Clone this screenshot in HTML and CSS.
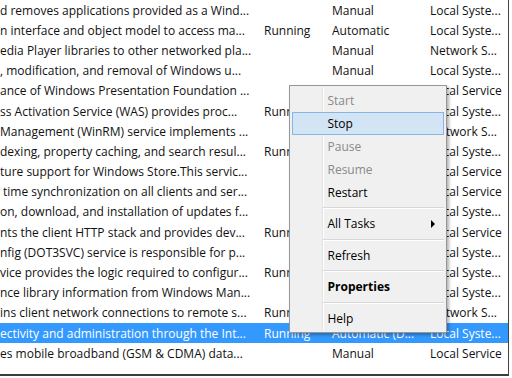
FILE: index.html
```html
<!DOCTYPE html>
<html>
<head>
<meta charset="utf-8">
<link rel="stylesheet" href="styles.css">
</head>
<body>
<div class="window">
  <div class="list">
    <div class="row"><span class="c desc">d removes applications provided as a Wind...</span><span class="c status"></span><span class="c type">Manual</span><span class="c logon">Local Syste...</span></div>
    <div class="row"><span class="c desc">n interface and object model to access ma...</span><span class="c status">Running</span><span class="c type">Automatic</span><span class="c logon">Local Syste...</span></div>
    <div class="row"><span class="c desc">edia Player libraries to other networked pla...</span><span class="c status"></span><span class="c type">Manual</span><span class="c logon">Network S...</span></div>
    <div class="row"><span class="c desc">, modification, and removal of Windows u...</span><span class="c status"></span><span class="c type">Manual</span><span class="c logon">Local Syste...</span></div>
    <div class="row"><span class="c desc">ance of Windows Presentation Foundation ...</span><span class="c status"></span><span class="c type"></span><span class="c logon">Local Service</span></div>
    <div class="row"><span class="c desc">ss Activation Service (WAS) provides proc...</span><span class="c status">Running</span><span class="c type"></span><span class="c logon">Local Syste...</span></div>
    <div class="row"><span class="c desc">Management (WinRM) service implements ...</span><span class="c status"></span><span class="c type"></span><span class="c logon">Network S...</span></div>
    <div class="row"><span class="c desc">dexing, property caching, and search resul...</span><span class="c status">Running</span><span class="c type"></span><span class="c logon">Local Syste...</span></div>
    <div class="row"><span class="c desc">ture support for Windows Store.This servic...</span><span class="c status"></span><span class="c type"></span><span class="c logon">Local Service</span></div>
    <div class="row"><span class="c desc lead">time synchronization on all clients and ser...</span><span class="c status"></span><span class="c type"></span><span class="c logon">Local Service</span></div>
    <div class="row"><span class="c desc">on, download, and installation of updates f...</span><span class="c status"></span><span class="c type"></span><span class="c logon">Local Syste...</span></div>
    <div class="row"><span class="c desc">nts the client HTTP stack and provides dev...</span><span class="c status">Running</span><span class="c type"></span><span class="c logon">Local Service</span></div>
    <div class="row"><span class="c desc">nfig (DOT3SVC) service is responsible for p...</span><span class="c status"></span><span class="c type"></span><span class="c logon">Local Syste...</span></div>
    <div class="row"><span class="c desc">vice provides the logic required to configur...</span><span class="c status">Running</span><span class="c type"></span><span class="c logon">Local Syste...</span></div>
    <div class="row"><span class="c desc">nce library information from Windows Man...</span><span class="c status"></span><span class="c type"></span><span class="c logon">Local Syste...</span></div>
    <div class="row"><span class="c desc">ins client network connections to remote s...</span><span class="c status">Running</span><span class="c type"></span><span class="c logon">Network S...</span></div>
    <div class="row selected"><span class="c desc">ectivity and administration through the Int...</span><span class="c status">Running</span><span class="c type">Automatic (D...</span><span class="c logon">Local Syste...</span></div>
    <div class="row"><span class="c desc">es mobile broadband (GSM &amp; CDMA) data...</span><span class="c status"></span><span class="c type">Manual</span><span class="c logon">Local Service</span></div>
  </div>

  <div class="menu">
    <div class="item disabled">Start</div>
    <div class="item hl">Stop</div>
    <div class="item disabled">Pause</div>
    <div class="item disabled">Resume</div>
    <div class="item">Restart</div>
    <div class="sep"></div>
    <div class="item sub"><span>All Tasks</span><span class="arrow"></span></div>
    <div class="sep"></div>
    <div class="item">Refresh</div>
    <div class="sep"></div>
    <div class="item bold">Properties</div>
    <div class="sep"></div>
    <div class="item">Help</div>
  </div>
</div>
</body>
</html>
```

FILE: styles.css
```css
* { box-sizing: border-box; }

body {
  margin: 0;
  background: #ffffff;
  font-family: "Open Sans", "Noto Sans", "DejaVu Sans", sans-serif;
  font-size: 12px;
  color: #111111;
}

.window {
  position: relative;
  width: 509px;
  height: 376px;
  border-right: 1px solid #444444;
  border-bottom: 2px solid #3c3c3c;
  overflow: hidden;
}

.list {
  display: flex;
  flex-direction: column;
}

.row {
  display: grid;
  grid-template-columns: 264px 68px 98px 1fr;
  height: 20.2px;
  align-items: center;
  white-space: nowrap;
}

.c {
  overflow: hidden;
}

.desc.lead {
  padding-left: 3px;
}

.row.selected {
  background: #3399ff;
  color: #ffffff;
}

.menu {
  position: absolute;
  left: 289px;
  top: 85px;
  width: 158px;
  padding: 2.5px 2px 2px 2px;
  background: #f0f0f0;
  border: 1px solid #979797;
  box-shadow: 2px 2px 3px rgba(0, 0, 0, 0.3);
  color: #000000;
}

.menu::before {
  content: "";
  position: absolute;
  left: 32px;
  top: 2px;
  bottom: 2px;
  width: 1px;
  background: #e2e3e3;
  box-shadow: 1px 0 0 #ffffff;
}

.item {
  position: relative;
  height: 23px;
  line-height: 23px;
  padding-left: 35.5px;
  padding-right: 9px;
}

.item.disabled {
  color: #8a8a8a;
}

.item.hl {
  background: #d3e4f5;
  box-shadow: inset 0 0 0 1px #86b6e6;
}

.item.bold {
  font-weight: 700;
}

.item.sub {
  display: flex;
  justify-content: space-between;
  align-items: center;
}

.arrow {
  width: 0;
  height: 0;
  border-left: 4px solid #000000;
  border-top: 4px solid transparent;
  border-bottom: 4px solid transparent;
}

.sep {
  height: 8.5px;
  display: flex;
  align-items: center;
  padding-left: 31px;
  position: relative;
}

.sep::after {
  content: "";
  flex: 1;
  height: 1px;
  background: #d7d7d7;
  box-shadow: 0 1px 0 #ffffff;
}
```
